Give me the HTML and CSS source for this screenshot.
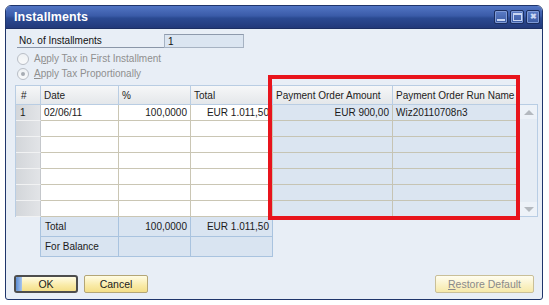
FILE: index.html
```html
<!DOCTYPE html>
<html lang="en">
<head>
    <meta charset="UTF-8">
    <title>Installments</title>
    <link rel="stylesheet" href="styles.css">
</head>
<body>

    <div class="window">
        <div class="titlebar">
            <span class="title">Installments</span>
            <div class="controls">
                <span class="ctl"><span class="ctl-min"></span></span>
                <span class="ctl"><span class="ctl-max"></span></span>
                <span class="ctl ctl-close">&#10006;</span>
            </div>
        </div>

        <div class="content">
            <div class="field-row">
                <span class="field-label">No. of Installments</span>
                <span class="field-input">1</span>
            </div>
            <div class="radio-row">
                <span class="radio"></span>
                <span>A<u>p</u>ply Tax in First Installment</span>
            </div>
            <div class="radio-row">
                <span class="radio checked"></span>
                <span><u>A</u>pply Tax Proportionally</span>
            </div>

            <div class="grid-area">
                <div class="grid">
                    <div class="hd">#</div>
                    <div class="hd">Date</div>
                    <div class="hd">%</div>
                    <div class="hd">Total</div>
                    <div class="hd">Payment Order Amount</div>
                    <div class="hd">Payment Order Run Name</div>

                    <div class="rh">1</div>
                    <div class="cell">02/06/11</div>
                    <div class="cell num">100,0000</div>
                    <div class="cell num">EUR 1.011,50</div>
                    <div class="cell ro num">EUR 900,00</div>
                    <div class="cell ro">Wiz20110708n3</div>
                </div>
                <div class="scrollbar">
                    <span class="sb-btn"><span class="arrow-up"></span></span>
                    <span class="sb-btn"><span class="arrow-down"></span></span>
                </div>
            </div>

            <div class="totals">
                <div class="tc">Total</div>
                <div class="tc num">100,0000</div>
                <div class="tc num">EUR 1.011,50</div>
                <div class="tc">For Balance</div>
                <div class="tc"></div>
                <div class="tc"></div>
            </div>

            <div class="buttons">
                <button class="btn btn-default"><span class="focus-strip"></span>OK</button>
                <button class="btn">Cancel</button>
                <button class="btn btn-disabled"><u>R</u>estore Default</button>
            </div>
        </div>

        <div class="highlight"></div>
    </div>

    <script>
        // six empty rows below the first one
        const grid = document.querySelector('.grid');
        for (let i = 0; i < 6; i++) {
            grid.insertAdjacentHTML('beforeend', `
                <div class="rh"></div>
                <div class="cell"></div>
                <div class="cell"></div>
                <div class="cell"></div>
                <div class="cell ro"></div>
                <div class="cell ro"></div>
            `);
        }
    </script>

</body>
</html>
```

FILE: styles.css
```css
body {
    font-family: 'Liberation Sans', Arial, sans-serif;
    font-size: 10px;
    color: #1a1a1a;
    margin: 0;
    padding: 0;
    background: #ffffff;
}
.window {
    position: relative;
    box-sizing: border-box;
    margin: 5px 0 0 5px;
    width: 538px;
    height: 295px;
    border: 1px solid #1f356b;
    border-radius: 6px 6px 3px 3px;
    background: #e8eef6;
    overflow: hidden;
}
.titlebar {
    display: flex;
    align-items: center;
    justify-content: space-between;
    height: 22px;
    padding: 0 2px 0 8px;
    background: linear-gradient(#5275c4, #3a5ba8 45%, #2b4a92 55%, #22397a);
    border-bottom: 1px solid #1c2f63;
}
.title {
    color: #fff;
    font-weight: bold;
    font-size: 12.5px;
    letter-spacing: 0.1px;
}
.controls {
    display: flex;
    gap: 2px;
}
.ctl {
    box-sizing: border-box;
    display: flex;
    align-items: center;
    justify-content: center;
    width: 14px;
    height: 14px;
    border: 1px solid #1b2d5e;
    border-radius: 2px;
    background: linear-gradient(#5b7cc6, #3b5aa2);
    box-shadow: inset 0 0 0 1px #7f9ad6;
}
.ctl-min {
    width: 8px;
    height: 2px;
    margin-top: 6px;
    background: #c9d6f2;
}
.ctl-max {
    box-sizing: border-box;
    width: 9px;
    height: 8px;
    border: 1px solid #c9d6f2;
    border-top-width: 2px;
}
.ctl-close {
    color: #c9d6f2;
    font-size: 8px;
    font-weight: bold;
    line-height: 1;
}
.content {
    padding: 5px 0 0 9px;
}
.field-row {
    display: flex;
    margin-left: 2px;
    height: 14px;
}
.field-label {
    box-sizing: border-box;
    width: 147px;
    padding: 1px 0 0 2px;
    border-bottom: 1px solid #8a96a8;
    color: #111;
}
.field-input {
    box-sizing: border-box;
    width: 80px;
    padding: 1px 0 0 3px;
    background: #dbe5f1;
    border: 1px solid #a6b2c2;
    border-top-color: #8e9aac;
    color: #111;
}
.radio-row {
    display: flex;
    align-items: center;
    gap: 5px;
    height: 15px;
    margin-left: 2px;
    color: #8f8f8f;
}
.field-row + .radio-row {
    margin-top: 3px;
}
.radio {
    box-sizing: border-box;
    display: flex;
    align-items: center;
    justify-content: center;
    width: 12px;
    height: 12px;
    border: 1px solid #b9bec6;
    border-radius: 50%;
    background: linear-gradient(#eef1f4, #f8f9fa);
}
.radio.checked::after {
    content: "";
    width: 4px;
    height: 4px;
    border-radius: 50%;
    background: #a7acb3;
}
.grid-area {
    display: flex;
    margin-top: 4px;
}
.grid {
    display: grid;
    grid-template-columns: 25px 78px 72px 82px 120px 126px;
    grid-auto-rows: 16px;
    grid-template-rows: 19px;
    border-top: 1px solid #b9cde3;
    border-left: 1px solid #b9cde3;
}
.grid > div {
    box-sizing: border-box;
    display: flex;
    align-items: center;
    padding: 0 3px;
    white-space: nowrap;
    overflow: hidden;
}
.hd {
    background: linear-gradient(#f6f7f8, #e4e7ea);
    border-right: 1px solid #b9cde3;
    border-bottom: 1px solid #b9cde3;
    color: #222;
}
.hd:first-child {
    padding-left: 5px;
}
.rh {
    background: linear-gradient(to right, #d3d6da, #e2e4e7);
    border-right: 1px solid #c4c7cb;
    border-bottom: 1px solid #f1f2f3;
    padding-left: 4px !important;
}
.cell {
    background: #fff;
    border-right: 1px solid #cac6b4;
    border-bottom: 1px solid #cac6b4;
}
.cell.ro {
    background: #dbe5f1;
    border-color: #c6c4b4;
}
.num {
    justify-content: flex-end;
}
.scrollbar {
    box-sizing: border-box;
    display: flex;
    flex-direction: column;
    justify-content: space-between;
    width: 19px;
    height: 113px;
    margin-top: 19px;
    background: #e5ecf4;
    border: 1px solid #b8cde4;
}
.sb-btn {
    display: flex;
    align-items: center;
    justify-content: center;
    height: 14px;
    background: #edf2f8;
}
.arrow-up, .arrow-down {
    width: 0;
    height: 0;
    border-left: 5px solid transparent;
    border-right: 5px solid transparent;
}
.arrow-up {
    border-bottom: 5px solid #b4b9bf;
}
.arrow-down {
    border-top: 5px solid #b4b9bf;
}
.totals {
    display: grid;
    grid-template-columns: 78px 72px 82px;
    grid-auto-rows: 20px;
    margin-left: 25px;
    width: max-content;
    border-left: 1px solid #a9c3df;
}
.tc {
    box-sizing: border-box;
    display: flex;
    align-items: center;
    padding: 0 3px 0 4px;
    background: #d9e4f1;
    border-right: 1px solid #a9c3df;
    border-bottom: 1px solid #a9c3df;
    white-space: nowrap;
}
.buttons {
    display: flex;
    gap: 6px;
    margin: 18px 0 0 -1px;
    padding-right: 8px;
}
.btn {
    position: relative;
    box-sizing: border-box;
    width: 64px;
    height: 18px;
    padding: 0;
    font-family: 'Liberation Sans', Arial, sans-serif;
    font-size: 10.5px;
    color: #1a1a1a;
    border: 1px solid #b4a676;
    border-radius: 2px;
    background: linear-gradient(#fffce4, #f9eaa6 60%, #f4df88);
    overflow: hidden;
}
.btn-default {
    border: 2px solid #4d4d4d;
    border-radius: 3px;
}
.focus-strip {
    position: absolute;
    left: 0;
    top: 0;
    bottom: 0;
    width: 6px;
    background: linear-gradient(to right, #5a8bd3, #a9c6ee);
}
.btn-disabled {
    width: 99px;
    margin-left: auto;
    color: #8a8a8a;
    border-color: #c9bf98;
    background: linear-gradient(#fffdf0, #faf1c4 60%, #f6e9aa);
}
.highlight {
    position: absolute;
    left: 262px;
    top: 69px;
    width: 252px;
    height: 145px;
    box-sizing: border-box;
    border: 4px solid #e8141c;
}
```
